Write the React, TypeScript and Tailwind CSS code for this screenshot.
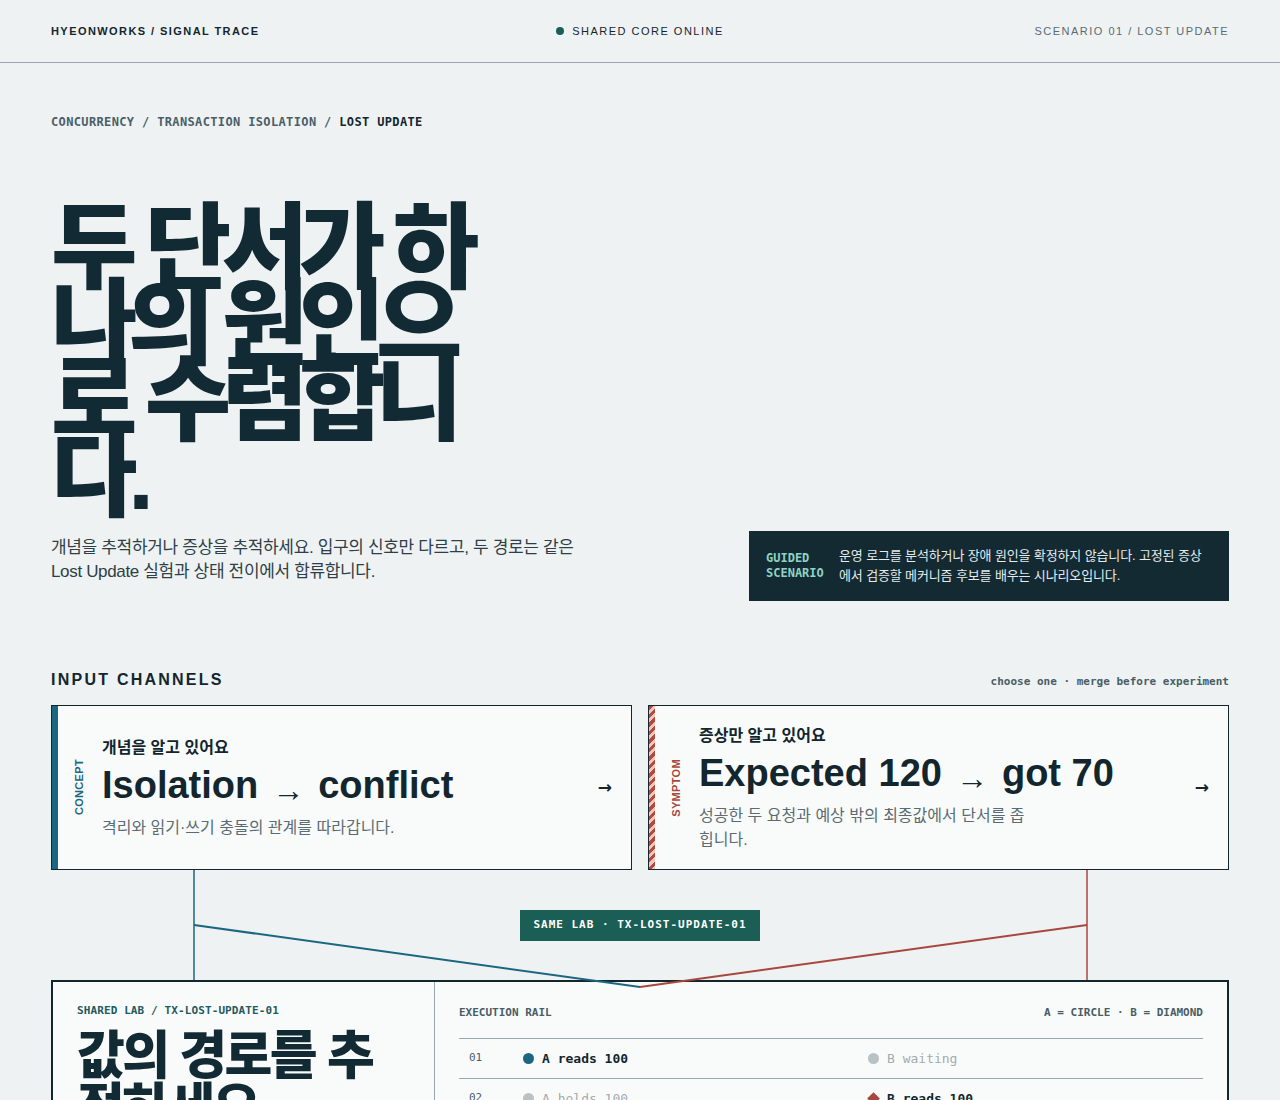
const sans = "[font-family:'Liberation_Sans','Noto_Sans_CJK_KR',sans-serif]";
const mono = "[font-family:'DejaVu_Sans_Mono','Noto_Sans_CJK_KR',monospace]";

function Header() {
  return (
    <header className="grid h-[63px] grid-cols-3 items-center border-b border-[#9aa6ab] px-[51px]">
      <div className="text-[11px] font-bold tracking-[0.13em] text-[#13262e]">HYEONWORKS / SIGNAL TRACE</div>
      <div className="flex items-center justify-center gap-2 text-[11px] tracking-[0.135em] text-[#13262e]">
        <span className="h-[8px] w-[8px] rounded-full bg-[#1a5e55]" />
        SHARED CORE ONLINE
      </div>
      <div className="text-right text-[11px] tracking-[0.135em] text-[#5b6b73]">SCENARIO 01 / LOST UPDATE</div>
    </header>
  );
}

type ChannelProps = {
  label: string;
  labelColor: string;
  bar: string;
  title: string;
  from: string;
  to: string;
  desc: string;
};

function Channel({ label, labelColor, bar, title, from, to, desc }: ChannelProps) {
  return (
    <div className="flex h-[165px] border border-[#13262e] bg-[#f9fbfb]">
      <div className={`w-[6px] shrink-0 ${bar}`} />
      <div className="flex w-[42px] shrink-0 items-center justify-center">
        <span className={`rotate-180 text-[11px] font-bold tracking-[0.03em] [writing-mode:vertical-rl] ${labelColor}`}>
          {label}
        </span>
      </div>
      <div className="flex flex-1 flex-col justify-center pl-[2px]">
        <div className="text-[16px] font-bold leading-6 text-[#13262e]">{title}</div>
        <div className="mt-[2px] whitespace-nowrap text-[38px] font-bold leading-[46px] text-[#13262e]">
          {from}
          <span className="mx-[14px] inline-block translate-y-[3px] text-[32px] font-normal">→</span>
          {to}
        </div>
        <p className="mt-[6px] max-w-[334px] text-[16px] leading-6 text-[#5b6b73]">{desc}</p>
      </div>
      <div className="flex items-center pr-[19px] text-[17px] font-bold text-[#13262e] [font-family:'DejaVu_Sans',sans-serif]">
        →
      </div>
    </div>
  );
}

function Connectors() {
  return (
    <div className="relative flex h-[110px] justify-center pt-[40px]">
      <svg className="absolute left-0 top-0 overflow-visible" width="1178" height="110" viewBox="0 0 1178 110" fill="none">
        <line x1="143" y1="0" x2="143" y2="110" stroke="#1b6680" strokeWidth="1.5" />
        <line x1="1036" y1="0" x2="1036" y2="110" stroke="#a8473d" strokeWidth="1.5" />
        <line x1="143" y1="55" x2="589" y2="117" stroke="#1b6680" strokeWidth="2" />
        <line x1="1036" y1="55" x2="589" y2="117" stroke="#a8473d" strokeWidth="2" />
      </svg>
      <div className={`flex h-[31px] w-[240px] items-center justify-center bg-[#1a5e55] text-[11px] font-bold tracking-[0.09em] text-white ${mono}`}>
        SAME LAB · TX-LOST-UPDATE-01
      </div>
    </div>
  );
}

type Step = { n: string; a: string; aOn: boolean; b: string; bOn: boolean };

const steps: Step[] = [
  { n: "01", a: "A reads 100", aOn: true, b: "B waiting", bOn: false },
  { n: "02", a: "A holds 100", aOn: false, b: "B reads 100", bOn: true },
  { n: "03", a: "A writes 120", aOn: true, b: "B holds 100", bOn: false },
  { n: "04", a: "A commits", aOn: false, b: "B writes 70", bOn: true },
];

function Rail() {
  return (
    <div className="px-6 pt-6 pb-8">
      <div className={`flex justify-between text-[11px] font-bold leading-[14px] text-[#4a5d66] ${mono}`}>
        <span>EXECUTION RAIL</span>
        <span>A = CIRCLE · B = DIAMOND</span>
      </div>
      <div className="mt-[18px] border-t border-[#9aa6ab]">
        {steps.map((s) => (
          <div key={s.n} className={`grid h-[40px] grid-cols-[54px_345px_1fr] items-center border-b border-[#9aa6ab] pl-[10px] ${mono}`}>
            <span className="text-[11px] text-[#4a5d66]">{s.n}</span>
            <div className={`flex items-center gap-[8px] text-[13px] ${s.aOn ? "font-bold text-[#13262e]" : "text-[#a3acb0]"}`}>
              <span className={`h-[11px] w-[11px] rounded-full ${s.aOn ? "bg-[#1b6680]" : "bg-[#b9c1c4]"}`} />
              {s.a}
            </div>
            <div className={`flex items-center gap-[8px] text-[13px] ${s.bOn ? "font-bold text-[#13262e]" : "text-[#a3acb0]"}`}>
              {s.bOn ? (
                <span className="mx-[1px] h-[9px] w-[9px] rotate-45 bg-[#a8473d]" />
              ) : (
                <span className="h-[11px] w-[11px] rounded-full bg-[#b9c1c4]" />
              )}
              {s.b}
            </div>
          </div>
        ))}
      </div>
    </div>
  );
}

export default function App() {
  return (
    <div className={`min-h-screen bg-[#eef2f3] text-[#13262e] ${sans}`}>
      <Header />
      <main className="px-[51px] pb-20">
        <nav className={`mt-[51px] text-[12px] font-bold leading-4 tracking-[0.03em] text-[#4a5f69] ${mono}`}>
          CONCURRENCY / TRANSACTION ISOLATION / <span className="text-[#13262e]">LOST UPDATE</span>
        </nav>

        <h1 className="mt-[81px] max-w-[466px] text-[94px] font-black leading-[76px] tracking-[-0.1em] text-[#122a33]">
          두 단서가 하나의 원인으로 수렴합니다.
        </h1>

        <div className="mt-[16px] flex items-start justify-between">
          <p className="mt-[5px] max-w-[540px] text-[17px] leading-6 tracking-[-0.02em] text-[#2e3f47]">
            개념을 추적하거나 증상을 추적하세요. 입구의 신호만 다르고, 두 경로는 같은 Lost Update 실험과 상태 전이에서 합류합니다.
          </p>
          <div className="flex h-[70px] w-[480px] items-center gap-[13px] bg-[#132a33] pl-[17px] pr-[24px]">
            <div className={`w-[60px] shrink-0 text-[12px] font-bold leading-[15px] text-[#8ed3c3] ${mono}`}>
              GUIDED
              <br />
              SCENARIO
            </div>
            <p className="text-[13px] leading-[20px] tracking-[-0.01em] text-[#e3ecee]">
              운영 로그를 분석하거나 장애 원인을 확정하지 않습니다. 고정된 증상에서 검증할 메커니즘 후보를 배우는 시나리오입니다.
            </p>
          </div>
        </div>

        <div className="mt-[69px] flex items-end justify-between">
          <h2 className="text-[16px] font-bold leading-5 tracking-[0.14em] text-[#13262e]">INPUT CHANNELS</h2>
          <span className={`text-[11px] font-bold text-[#4a5d66] ${mono}`}>choose one · merge before experiment</span>
        </div>

        <div className="mt-[15px] grid grid-cols-2 gap-4">
          <Channel
            label="CONCEPT"
            labelColor="text-[#1b6680]"
            bar="bg-[#1b6680]"
            title="개념을 알고 있어요"
            from="Isolation"
            to="conflict"
            desc="격리와 읽기·쓰기 충돌의 관계를 따라갑니다."
          />
          <Channel
            label="SYMPTOM"
            labelColor="text-[#a8473d]"
            bar="bg-[repeating-linear-gradient(135deg,#b04a40_0px,#b04a40_3px,#f4c4ba_3px,#f4c4ba_6px)]"
            title="증상만 알고 있어요"
            from="Expected 120"
            to="got 70"
            desc="성공한 두 요청과 예상 밖의 최종값에서 단서를 좁힙니다."
          />
        </div>

        <Connectors />

        <section className="grid grid-cols-[382px_1fr] border-2 border-[#13262e] bg-[#f9fbfb]">
          <div className="border-r border-[#9aa6ab] px-6 pt-[22px] pb-8">
            <div className={`text-[11px] font-bold leading-[14px] tracking-[0.01em] text-[#1e5a60] ${mono}`}>
              SHARED LAB / TX-LOST-UPDATE-01
            </div>
            <h3 className="mt-[12px] text-[52px] font-black leading-[52px] tracking-[-0.05em] text-[#122a33]">
              값의 경로를 추적하세요.
            </h3>
            <p className="mt-4 text-[15px] leading-6 text-[#5b6b73]">
              두 트랜잭션이 같은 값을 읽고 각자 덮어쓸 때 어떤 쓰기가 사라지는지 단계별로 확인합니다.
            </p>
          </div>
          <Rail />
        </section>
      </main>
    </div>
  );
}
